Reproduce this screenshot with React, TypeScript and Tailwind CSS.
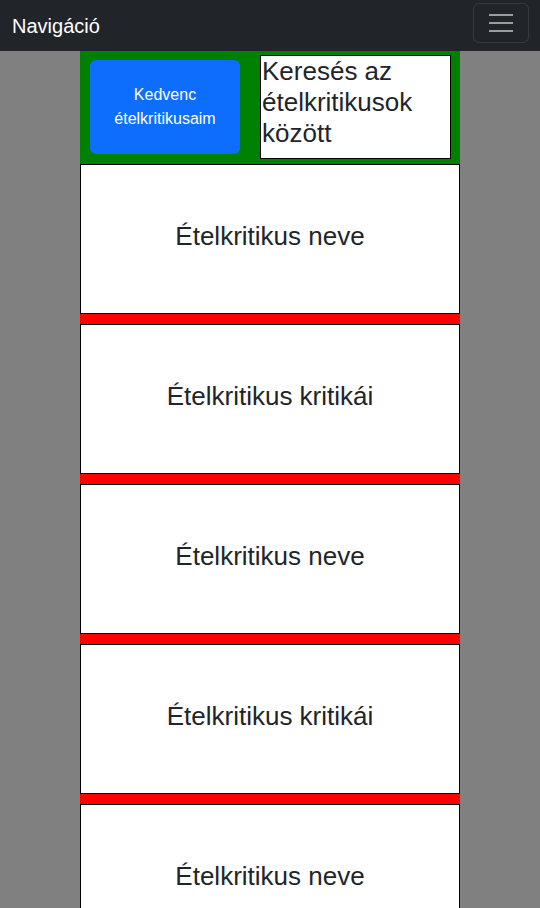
import React from "react";

const cards = [
  "Ételkritikus neve",
  "Ételkritikus kritikái",
  "Ételkritikus neve",
  "Ételkritikus kritikái",
  "Ételkritikus neve",
];

const App: React.FC = () => {
  return (
    <div
      className="min-h-[908px] w-full bg-[#808080]"
      style={{ fontFamily: '"Liberation Sans", Arial, sans-serif' }}
    >
      <nav className="flex h-[51px] items-center justify-between bg-[#212529] pl-3 pr-[11px]">
        <span className="text-[20px] leading-[30px] text-white">Navigáció</span>
        <button className="mb-[5px] flex h-10 w-14 flex-col items-center justify-center gap-[6px] rounded-md border border-white/10">
          <span className="h-[2px] w-6 bg-[#9c9d9f]" />
          <span className="h-[2px] w-6 bg-[#9c9d9f]" />
          <span className="h-[2px] w-6 bg-[#9c9d9f]" />
        </button>
      </nav>

      <main className="mx-auto w-[380px] bg-[#ff0000]">
        <div className="flex h-[113px] items-start bg-[#008000]">
          <button className="ml-[10px] mt-[9px] flex h-[94px] w-[150px] items-center justify-center rounded-md bg-[#0d6efd] text-center text-[16px] leading-6 text-white">
            Kedvenc
            <br />
            ételkritikusaim
          </button>
          <div className="ml-[20px] mt-[4px] h-[104px] w-[191px] border border-black bg-white px-[1px] text-[26px] leading-[31px] text-[#212529]">
            Keresés az ételkritikusok között
          </div>
        </div>

        <div className="flex flex-col gap-[10px]">
          {cards.map((label, i) => (
            <div
              key={i}
              className="flex h-[150px] items-center justify-center border border-black bg-white"
            >
              <span className="mb-1 text-[26px] leading-[1.2] text-[#212529]">{label}</span>
            </div>
          ))}
        </div>
      </main>
    </div>
  );
};

export default App;
